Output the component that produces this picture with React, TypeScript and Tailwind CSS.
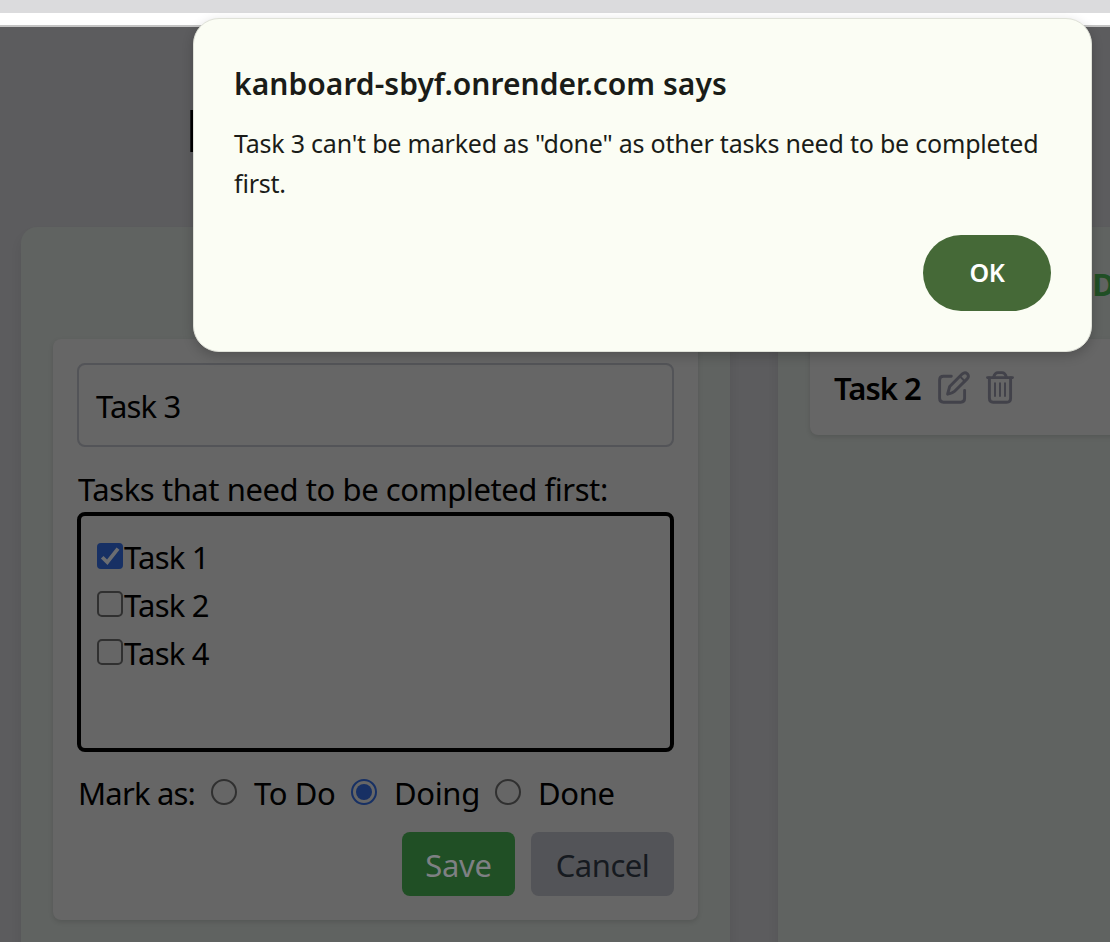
import React from "react";

function EditIcon() {
  return (
    <svg width="32" height="33" viewBox="0 0 32 33" fill="none" stroke="#42424a" strokeWidth="2.9" strokeLinecap="round" strokeLinejoin="round" className="block">
      <path d="M13.3 5.2H5.5Q1.6 5.2 1.6 9.1V27.3Q1.6 31.2 5.5 31.2H22.8Q26.6 31.2 26.6 27.3V19.5" />
      <path d="M9.6 23.2L11.7 15.5L24.4 2.8Q27 .6 29.3 2.7Q31.4 5.2 29.4 7.6L16.6 20.2Q15.2 21.6 9.6 23.2Z" />
      <path d="M22 5.4L26.8 10.2" strokeWidth="2" />
    </svg>
  );
}

function TrashIcon() {
  return (
    <svg width="28" height="33" viewBox="0 0 28 33" fill="none" stroke="#42424a" strokeWidth="2.9" strokeLinecap="round" strokeLinejoin="round" className="block">
      <path d="M1.5 6.6H26.5" />
      <path d="M3.4 7V27.2Q3.4 31.2 7.2 31.2H20.6Q24.6 31.2 24.6 27.2V7" />
      <path d="M7.5 6.5Q8.8 1.6 12 1.6H16Q19.2 1.6 20.5 6.5" />
      <path d="M9 12.2V25M14 12.2V25M19 12.2V25" strokeWidth="2" />
    </svg>
  );
}

function Checkbox({ checked }: { checked?: boolean }) {
  return checked ? (
    <svg width="26" height="26" viewBox="0 0 26 26" className="block shrink-0">
      <rect width="26" height="26" rx="4" fill="#173064" />
      <path d="M5.2 14.2L10.3 19.2L21 5.6" fill="none" stroke="#6b6d71" strokeWidth="3.7" />
    </svg>
  ) : (
    <span className="block size-[26px] shrink-0 rounded-[5px] border-2 border-[#303030]" />
  );
}

function Radio({ label, selected }: { label: string; selected?: boolean }) {
  return (
    <>
      <span
        className={
          selected
            ? "mt-[7px] flex size-[26px] shrink-0 items-center justify-center rounded-full border-2 border-[#173064]"
            : "mt-[7px] block size-[26px] shrink-0 rounded-full border-2 border-[#303030]"
        }
      >
        {selected && <span className="size-4 rounded-full bg-[#173064]" />}
      </span>
      <span className="-mt-px pl-px tracking-[-0.35px]">{label}</span>
    </>
  );
}

const options = [
  { name: "Task 1", checked: true },
  { name: "Task 2", checked: false },
  { name: "Task 4", checked: false },
];

export default function App() {
  return (
    <div className="relative flex h-[942px] w-[1110px] flex-col overflow-hidden bg-[#5c5c5e] font-['Noto_Sans',sans-serif] text-black">
      <div className="h-[13px] shrink-0 bg-[#dbdbdd]" />
      <div className="h-[14px] shrink-0 border-b-2 border-[#c4c4c4] bg-white" />
      <h1 className="mt-[87px] h-[60px] shrink-0 pl-[185px] text-[59px] leading-[30px] font-bold">K</h1>

      <div className="mt-[53px] flex min-h-0 flex-1 gap-12 pl-[21px]">
        <section className="h-[760px] w-[709px] shrink-0 rounded-2xl bg-[#606361] px-8 pt-28 shadow-[0_8px_12px_rgba(0,0,0,0.08)]">
          <div className="flex h-[581px] flex-col rounded-lg bg-[#666666] p-6 text-[31px] shadow-[0_2px_5px_rgba(0,0,0,0.12)]">
            <div className="flex h-[84px] shrink-0 items-center rounded-lg border-2 border-[#535458] px-[17px] pt-[2px]">
              <span className="tracking-[-0.8px]">Task 3</span>
            </div>
            <div className="mt-[18px] h-[47px] shrink-0 pl-px leading-[48px] tracking-[-0.43px] whitespace-nowrap">
              Tasks that need to be completed first:
            </div>
            <div className="flex h-[240px] shrink-0 flex-col rounded-lg border-4 border-black px-4 pt-[17px]">
              {options.map((o) => (
                <div key={o.name} className="flex h-12 items-center">
                  <span className="-mt-[3px]"><Checkbox checked={o.checked} /></span>
                  <span className="pl-px leading-[48px] tracking-[-0.75px]">{o.name}</span>
                </div>
              ))}
            </div>
            <div className="mt-5 flex h-12 shrink-0 leading-[44px] whitespace-nowrap">
              <span className="-mt-px w-[134px] pl-px tracking-[-0.8px]">Mark as:</span>
              <div className="flex w-[140px] gap-4"><Radio label="To Do" /></div>
              <div className="flex w-[144px] gap-4"><Radio label="Doing" selected /></div>
              <div className="flex gap-4"><Radio label="Done" /></div>
            </div>
            <div className="mt-[12px] flex justify-end gap-4">
              <div className="flex h-16 w-[113px] items-center justify-center rounded-lg bg-[#204f25] pt-[2px] tracking-[-0.3px] text-[#7e8083]">Save</div>
              <div className="flex h-16 w-[143px] items-center justify-center rounded-lg bg-[#535458] pt-[2px] tracking-[-0.5px] text-[#161a20]">Cancel</div>
            </div>
          </div>
        </section>

        <section className="h-[760px] w-[709px] shrink-0 rounded-2xl bg-[#606361] px-8 shadow-[0_8px_12px_rgba(0,0,0,0.08)]">
          <h2 className="h-28 text-center text-[31px] leading-[114px] font-bold text-[#204f25]">Done</h2>
          <div className="flex h-24 items-center rounded-lg bg-[#666666] px-6 shadow-[0_2px_5px_rgba(0,0,0,0.12)]">
            <span className="w-[104px] pt-[2px] text-[31px] font-semibold tracking-[-0.95px] whitespace-nowrap">Task 2</span>
            <EditIcon />
            <span className="ml-4"><TrashIcon /></span>
          </div>
        </section>
      </div>

      <div className="absolute top-[18px] left-[193px] h-[334px] w-[899px] rounded-[26px] border border-[#dfe1d8] bg-[#fbfdf4] px-10 text-[#1a1c18] shadow-[0_4px_12px_rgba(0,0,0,0.2)]">
        <h2 className="mt-[41px] text-[30px] leading-[48px] font-semibold tracking-[0.04px] whitespace-nowrap">kanboard-sbyf.onrender.com says</h2>
        <p className="mt-[15px] text-[25px] leading-10 tracking-[-0.21px] whitespace-nowrap">
          Task 3 can't be marked as "done" as other tasks need to be completed
          <br />
          first.
        </p>
        <div className="mt-[32px] flex justify-end">
          <button className="h-19 w-32 rounded-full bg-[#456937] text-[25px] font-semibold tracking-[-0.5px] text-white">OK</button>
        </div>
      </div>
    </div>
  );
}
